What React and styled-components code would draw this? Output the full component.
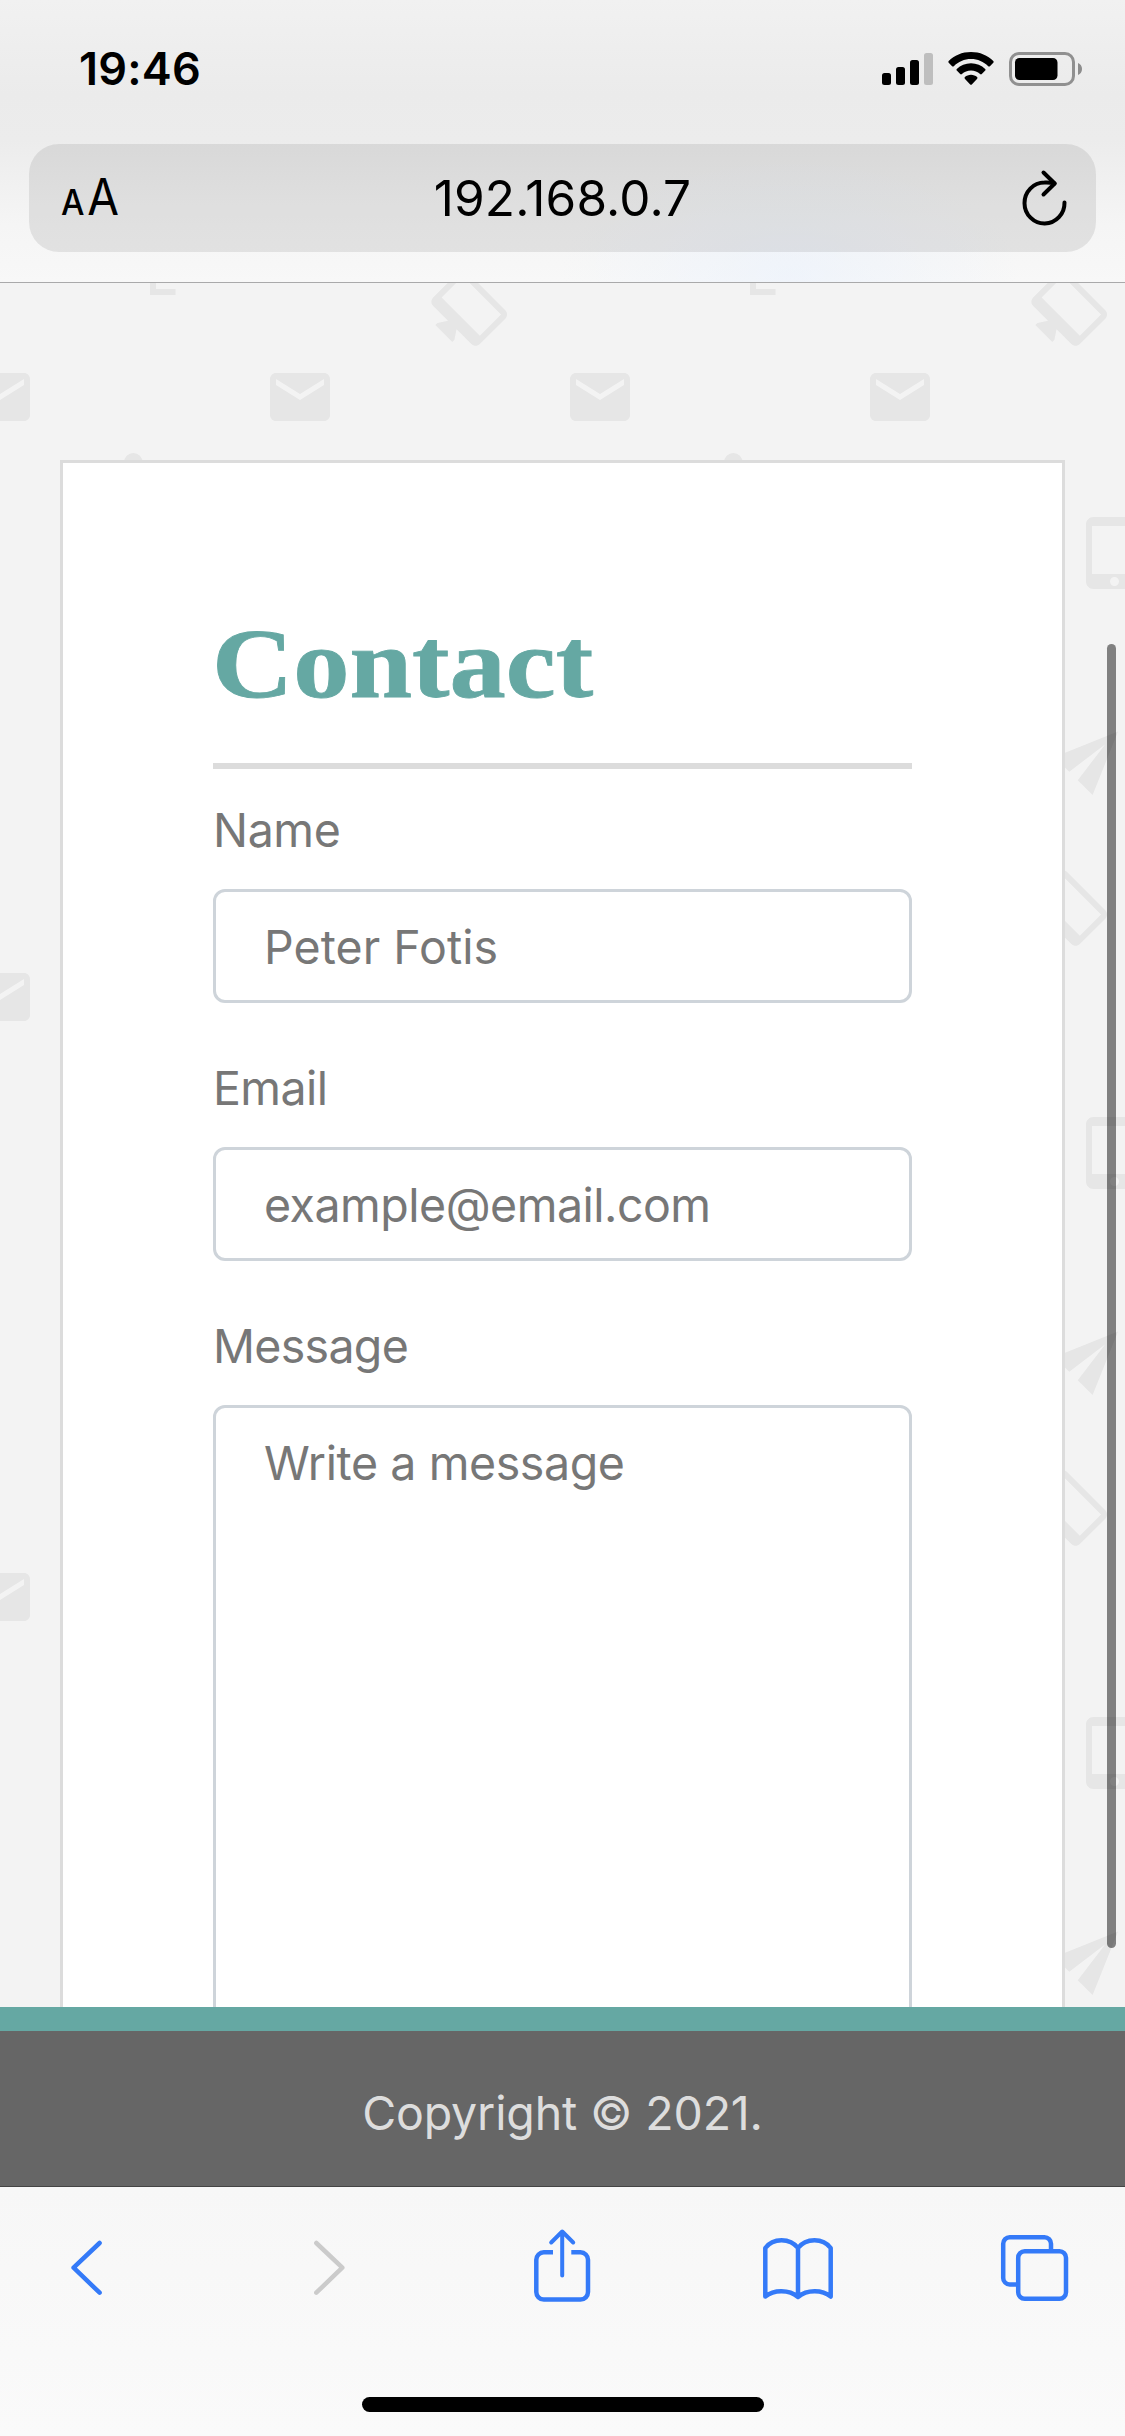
import React from "react";
import styled, { createGlobalStyle } from "styled-components";

const GlobalStyle = createGlobalStyle`
  *, *::before, *::after { box-sizing: border-box; }
  body { margin: 0; font-family: Inter, "Liberation Sans", sans-serif; }
`;

const Screen = styled.div`
  width: 1125px;
  height: 2436px;
  display: flex;
  flex-direction: column;
  overflow: hidden;
  background: #f3f3f3;
`;

const BrowserHeader = styled.header`
  flex: none;
  height: 283px;
  display: flex;
  flex-direction: column;
  border-bottom: 1px solid #a9a9aa;
  background:
    radial-gradient(ellipse 230px 120px at 790px 275px, rgba(228, 239, 255, 0.42), rgba(228, 239, 255, 0)),
    linear-gradient(#f1f1f1 0px, #ebebeb 95px, #ececec 140px, #f5f5f5 225px, #f8f8f8 282px);
`;

const StatusBar = styled.div`
  height: 144px;
  display: flex;
  justify-content: space-between;
  padding: 43px 43px 0 79px;
`;

const Clock = styled.div`
  font-size: 45px;
  font-weight: 600;
  line-height: 52px;
  letter-spacing: ${(p) => p.$tracking}px;
  color: #000;
`;

const StatusIcons = styled.div`
  display: flex;
  gap: 15px;
  padding-top: 9px;
`;

const AddressBar = styled.div`
  height: 108px;
  margin: 0 29px;
  padding: 0 28px 0 32px;
  display: grid;
  grid-template-columns: 60px 1fr 64px;
  align-items: center;
  border-radius: 30px;
  background: rgba(0, 0, 0, 0.082);
  color: #000;

  > svg {
    justify-self: end;
  }
`;

const TextSize = styled.div`
  display: flex;
  align-items: baseline;
  gap: 3px;
  padding-top: 3px;
  line-height: 60px;
  transform: scaleX(0.92);
  transform-origin: left;
`;

const Letter = styled.span`
  font-size: ${(p) => p.$size}px;
  font-weight: ${(p) => p.$weight};
`;

const Address = styled.div`
  font-size: 49.5px;
  line-height: 60px;
  letter-spacing: ${(p) => p.$tracking}px;
  text-align: center;
`;

const Page = styled.main`
  position: relative;
  flex: 1;
  min-height: 0;
  overflow: hidden;
  padding: 177px 60px 0;
`;

const Backdrop = styled.svg`
  position: absolute;
  inset: 0;
  width: 100%;
  height: 100%;
`;

const Card = styled.section`
  position: relative;
  height: 2000px;
  padding: 144px 150px 0;
  border: 3px solid #dcdcdc;
  background: #fff;
`;

const Title = styled.h1`
  width: max-content;
  margin: 0 0 0 -1px;
  height: 156px;
  line-height: 114px;
  font-family: Georgia, "Liberation Serif", serif;
  font-size: 100px;
  font-weight: 700;
  color: #65a8a3;
  -webkit-text-stroke: 0.8px #65a8a3;
  transform: scaleX(1.125);
  transform-origin: left;
`;

const Form = styled.form`
  border-top: 6px solid #dcdcdc;
  padding-top: 30px;
`;

const Field = styled.div`
  display: flex;
  flex-direction: column;
  margin-bottom: 54px;
`;

const Label = styled.label`
  height: 90px;
  line-height: 62px;
  font-size: 46.5px;
  letter-spacing: ${(p) => p.$tracking}px;
  color: #777;
`;

const Input = styled.input`
  display: block;
  width: 100%;
  height: ${(p) => p.$height}px;
  padding: 19px 48px 17px;
  border: 3px solid #ced4da;
  border-radius: 12px;
  outline: none;
  resize: none;
  background: #fff;
  font-family: inherit;
  font-size: 46.5px;
  line-height: 72px;
  letter-spacing: ${(p) => p.$tracking}px;

  &::placeholder {
    color: #777;
    opacity: 1;
  }
`;

const ScrollThumb = styled.div`
  position: absolute;
  top: 361px;
  right: 9px;
  width: 9px;
  height: 1304px;
  border-radius: 4.5px;
  background: rgba(0, 0, 0, 0.475);
`;

const Footer = styled.footer`
  flex: none;
  height: 180px;
  border-top: 24px solid #65a8a3;
  border-bottom: 1px solid #444;
  padding-top: 46px;
  background: #666;
  color: #ddd;
  font-size: 46.5px;
  line-height: 72px;
  letter-spacing: ${(p) => p.$tracking}px;
  text-align: center;
`;

const BrowserToolbar = styled.nav`
  flex: none;
  height: 249px;
  display: flex;
  flex-direction: column;
  justify-content: space-between;
  align-items: center;
  padding: 33px 0 24px;
  background: linear-gradient(#f7f7f7, #fafafa);
`;

const ToolRow = styled.div`
  align-self: stretch;
  display: flex;
  gap: 141px;
  padding-left: 39px;
`;

const ToolButton = styled.button`
  flex: none;
  width: 96px;
  height: 96px;
  padding: 0;
  border: 0;
  background: none;
  color: ${(p) => (p.$muted ? "#cbcbcb" : "#347af8")};

  svg {
    display: block;
    fill: none;
    stroke: currentColor;
    stroke-width: 4.5;
    stroke-linecap: round;
    stroke-linejoin: round;
  }
`;

const HomeIndicator = styled.div`
  width: 402px;
  height: 15px;
  border-radius: 7.5px;
  background: #000;
`;

const MAIL =
  "M20 4H4c-1.1 0-1.99.9-1.99 2L2 18c0 1.1.9 2 2 2h16c1.1 0 2-.9 2-2V6c0-1.1-.9-2-2-2zm0 4l-8 5-8-5V6l8 5 8-5v2z";
const TABLET =
  "M18.5 0h-14C3.12 0 2 1.12 2 2.5v19C2 22.88 3.12 24 4.5 24h14c1.38 0 2.5-1.12 2.5-2.5v-19C21 1.12 19.88 0 18.5 0zm-7 23c-.83 0-1.5-.67-1.5-1.5s.67-1.5 1.5-1.5 1.5.67 1.5 1.5-.67 1.5-1.5 1.5zm7.5-4H4V3h15v16z";
const MONITOR =
  "M21 2H3c-1.1 0-2 .9-2 2v12c0 1.1.9 2 2 2h7l-2 3v1h8v-1l-2-3h7c1.1 0 2-.9 2-2V4c0-1.1-.9-2-2-2zm0 12H3V4h18v10z";
const PLANE = "M2.01 21L23 12 2.01 3 2 10l15 2-15 2z";

function Motif({ d, x, y, turn = 0 }) {
  return <path d={d} transform={`translate(${x} ${y}) rotate(${turn}) scale(3) translate(-12 -12)`} />;
}

function PatternBackdrop() {
  return (
    <Backdrop aria-hidden="true">
      <defs>
        <pattern id="motifs" width="600" height="600" patternUnits="userSpaceOnUse" patternTransform="translate(0 -283)">
          <g fill="#e6e6e6">
            <Motif d={MAIL} x={0} y={397} />
            <Motif d={MAIL} x={300} y={397} />
            <Motif d={MAIL} x={600} y={397} />
            <Motif d={MONITOR} x={465} y={312.3} turn={45} />
            <Motif d={TABLET} x={516} y={553} />
            <Motif d={PLANE} x={494.7} y={154.8} turn={-45} />
            <path d="M150 259h6v30h19.5v6H150z" />
            <circle cx="133.3" cy="462.3" r="9.3" />
          </g>
        </pattern>
      </defs>
      <rect width="100%" height="100%" fill="url(#motifs)" />
    </Backdrop>
  );
}

function SignalIcon() {
  return (
    <svg width="51" height="34" viewBox="0 0 51 34">
      <rect x="0" y="21" width="9" height="12" rx="2.5" />
      <rect x="14" y="15" width="9" height="18" rx="2.5" />
      <rect x="28" y="8" width="9" height="25" rx="2.5" />
      <rect x="42" y="1" width="9" height="32" rx="2.5" fill="#bebebe" />
    </svg>
  );
}

function WifiIcon() {
  return (
    <svg width="46" height="34" viewBox="0 0 46 34">
      <path d="M23 0C31.800 0 39.800 3.400 45.300 9c.5.500.5 1.200 0 1.700l-3.400 3.500c-.5.500-1.200.5-1.700 0C35.700 9.800 29.700 7.100 23 7.100S10.300 9.800 5.800 14.200c-.5.500-1.200.5-1.700 0L.700 10.700c-.5-.5-.5-1.200 0-1.700C6.200 3.400 14.200 0 23 0z" />
      <path d="M23 11.300c5.500 0 10.500 2.100 14.200 5.600.5.500.5 1.200 0 1.700l-3.400 3.500c-.5.500-1.200.5-1.700 0-2.400-2.200-5.600-3.600-9.100-3.600s-6.700 1.400-9.100 3.600c-.5.500-1.200.5-1.700 0l-3.400-3.500c-.5-.5-.5-1.200 0-1.700 3.700-3.500 8.700-5.600 14.200-5.600z" />
      <path d="M23 22.800c2.400 0 4.500.9 6.100 2.300.5.500.5 1.100.1 1.600l-5.400 5.700c-.4.500-1.200.5-1.600 0l-5.400-5.700c-.4-.5-.4-1.100.1-1.600 1.600-1.400 3.700-2.300 6.100-2.300z" />
    </svg>
  );
}

function BatteryIcon() {
  return (
    <svg width="73" height="34" viewBox="0 0 73 34">
      <rect x="1.500" y="1.500" width="63" height="31" rx="8.500" fill="none" stroke="#909090" strokeWidth="3" />
      <rect x="6" y="6" width="42.500" height="22" rx="4.500" />
      <path d="M69 11c2.500 1 4 3.300 4 6s-1.500 5-4 6z" fill="#8d8d8d" />
    </svg>
  );
}

function ReloadIcon() {
  return (
    <svg width="48" height="60" viewBox="0 0 48 60" fill="none" stroke="#000" strokeWidth="4" strokeLinecap="round" strokeLinejoin="round">
      <path d="M44.500 34.500A20 20.500 0 1 1 24.500 14.500C28 14.300 31 14.500 34.500 15.500" />
      <path d="M23.500 4.500L34.700 15.500 23.500 26.500" />
    </svg>
  );
}

const tools = [
  { name: "Back", art: <path d="M60.600 23L34.600 47.700l26 25" /> },
  { name: "Forward", muted: true, art: <path d="M40.300 23l26 24.700-26 25" /> },
  {
    name: "Share",
    art: (
      <>
        <path strokeLinecap="butt" d="M40 32.300h-9.200a7.500 7.500 0 0 0-7.500 7.500V72a7.500 7.500 0 0 0 7.500 7.500h36.700a7.500 7.500 0 0 0 7.500-7.500V39.800a7.500 7.500 0 0 0-7.500-7.500h-9.200" />
        <path strokeWidth="4" d="M49.200 12v43.500M38.200 22.500L49.200 11.500l11 11" />
      </>
    ),
  },
  {
    name: "Bookmarks",
    art: <path d="M48 28C40 17.600 23 17.600 15.300 28v48.500C24 69.500 39 69.500 48 77c9-7.500 24-7.500 32.700-.5V28C73 17.600 56 17.600 48 28v49" />,
  },
  {
    name: "Tabs",
    art: (
      <>
        <rect x="31.200" y="31.200" width="47.800" height="47.600" rx="6.500" />
        <path strokeLinecap="butt" d="M31 64.400h-8.300a6.500 6.500 0 0 1-6.500-6.500V23.700a6.500 6.500 0 0 1 6.500-6.500h34.800a6.500 6.500 0 0 1 6.500 6.500V31" />
      </>
    ),
  },
];

export default function App() {
  return (
    <Screen>
      <GlobalStyle />
      <BrowserHeader>
        <StatusBar>
          <Clock $tracking={0.2}>19:46</Clock>
          <StatusIcons>
            <SignalIcon />
            <WifiIcon />
            <BatteryIcon />
          </StatusIcons>
        </StatusBar>
        <AddressBar>
          <TextSize>
            <Letter $size={36} $weight={500}>A</Letter>
            <Letter $size={50} $weight={400}>A</Letter>
          </TextSize>
          <Address $tracking={0.15}>192.168.0.7</Address>
          <ReloadIcon />
        </AddressBar>
      </BrowserHeader>

      <Page>
        <PatternBackdrop />
        <Card>
          <Title>Contact</Title>
          <Form>
            <Field>
              <Label htmlFor="name" $tracking={-0.4}>Name</Label>
              <Input id="name" $height={114} $tracking={0.05} placeholder="Peter Fotis" />
            </Field>
            <Field>
              <Label htmlFor="email" $tracking={-0.6}>Email</Label>
              <Input id="email" $height={114} $tracking={-0.5} placeholder="example@email.com" />
            </Field>
            <Field>
              <Label htmlFor="message" $tracking={-0.7}>Message</Label>
              <Input as="textarea" id="message" $height={900} $tracking={-0.4} placeholder="Write a message" />
            </Field>
          </Form>
        </Card>
        <ScrollThumb />
      </Page>

      <Footer $tracking={-0.15}>Copyright © 2021.</Footer>

      <BrowserToolbar>
        <ToolRow>
          {tools.map((tool) => (
            <ToolButton key={tool.name} type="button" aria-label={tool.name} $muted={tool.muted}>
              <svg width="96" height="96" viewBox="0 0 96 96">{tool.art}</svg>
            </ToolButton>
          ))}
        </ToolRow>
        <HomeIndicator />
      </BrowserToolbar>
    </Screen>
  );
}
